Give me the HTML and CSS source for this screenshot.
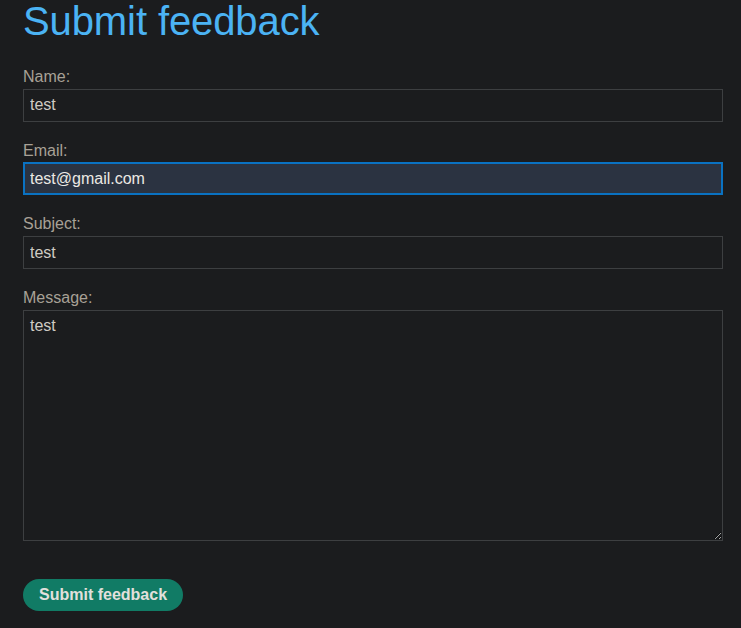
FILE: index.html
```html
<!DOCTYPE html>
<html lang="en">
<head>
<meta charset="utf-8">
<title>Submit feedback</title>
<link rel="stylesheet" href="styles.css">
</head>
<body>
<main class="page">
  <h1 class="title">Submit feedback</h1>
  <form class="form">
    <div class="field">
      <label class="label" for="name">Name:</label>
      <input class="input" id="name" type="text" value="test">
    </div>
    <div class="field">
      <label class="label" for="email">Email:</label>
      <input class="input input-focused" id="email" type="email" value="test@gmail.com">
    </div>
    <div class="field">
      <label class="label" for="subject">Subject:</label>
      <input class="input" id="subject" type="text" value="test">
    </div>
    <div class="field">
      <label class="label" for="message">Message:</label>
      <textarea class="input textarea" id="message">test</textarea>
    </div>
    <div class="actions">
      <button class="button" type="button">Submit feedback</button>
    </div>
  </form>
</main>
</body>
</html>
```
FILE: styles.css
```css
html, body {
  margin: 0;
  padding: 0;
  background: #1b1c1e;
}
body {
  font-family: "Liberation Sans", Arial, sans-serif;
  color: #cfcac2;
}
.page {
  padding: 0 18px 0 23px;
}
.title {
  margin: 1px 0 0 0;
  font-size: 40px;
  line-height: 40px;
  font-weight: 400;
  letter-spacing: -0.1px;
  color: #4bb3f4;
}
.form {
  margin-top: 27px;
  display: flex;
  flex-direction: column;
  gap: 20px;
}
.field {
  display: flex;
  flex-direction: column;
  gap: 2px;
}
.label {
  font-size: 16px;
  line-height: 18.7px;
  color: #a8a196;
}
.input {
  box-sizing: border-box;
  width: 700px;
  height: 33px;
  margin: 0;
  padding: 0 6px;
  border: 1px solid #3d3f41;
  border-radius: 0;
  background: #1b1c1e;
  color: #d0cbc3;
  font-family: "Liberation Sans", Arial, sans-serif;
  font-size: 16px;
  outline: none;
}
.input-focused {
  border: 2px solid #0a72c2;
  padding: 0 5px;
  background: #2b3341;
  color: #ece9e4;
}
.textarea {
  height: 231px;
  padding: 6px 6px;
  resize: vertical;
  line-height: 18px;
}
.actions {
  padding-top: 18px;
}
.button {
  height: 32px;
  padding: 0 16px;
  border: none;
  border-radius: 16px;
  background: #117b65;
  color: #e2e0dc;
  font-family: "Liberation Sans", Arial, sans-serif;
  font-size: 16px;
  font-weight: 700;
  cursor: pointer;
}
```
